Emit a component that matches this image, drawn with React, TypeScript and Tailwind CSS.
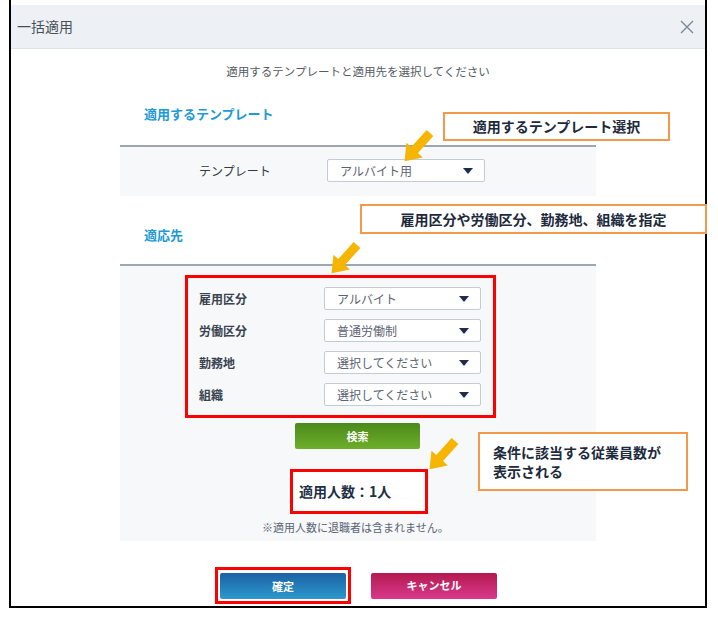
import React from 'react';

const font = { fontFamily: '"Noto Sans CJK JP", "Noto Sans", sans-serif' };

function Caret() {
  return (
    <svg width="10" height="6" viewBox="0 0 10 6" className="shrink-0">
      <polygon points="0,0 10,0 5,6" fill="#1e2d4a" />
    </svg>
  );
}

function Select({ value, width }: { value: string; width: string }) {
  return (
    <div className={`${width} h-[23px] bg-white border border-[#c3ccd6] rounded-[2px] flex items-center justify-between pl-[12px] pr-[11px]`}>
      <span className="text-[12px] text-[#5a6472] leading-none">{value}</span>
      <Caret />
    </div>
  );
}

function Arrow({ left, top }: { left: string; top: string }) {
  return (
    <svg width="40" height="40" viewBox="0 0 40 40" className={`absolute ${left} ${top} z-20`}>
      <g transform="translate(30,4) rotate(42)">
        <polygon points="-4.5,0 4.5,0 4.5,23 11,23 0,38 -11,23 -4.5,23" fill="#f6b500" />
      </g>
    </svg>
  );
}

const rows = [
  { label: '雇用区分', value: 'アルバイト' },
  { label: '労働区分', value: '普通労働制' },
  { label: '勤務地', value: '選択してください' },
  { label: '組織', value: '選択してください' },
];

export default function App() {
  return (
    <div className="relative w-[718px] h-[618px] bg-white overflow-hidden" style={font}>
      <div className="ml-[9px] w-[698px] h-[608px] border-x-2 border-b-2 border-black flex flex-col pt-[5px]">
        {/* header */}
        <div className="h-[44px] bg-[#edf1f5] border-b border-[#dde3ea] flex items-center justify-between pl-[6px] pr-[11px]">
          <span className="text-[14px] text-[#4a4f57]">一括適用</span>
          <svg width="14" height="14" viewBox="0 0 14 14">
            <path d="M1 1 L13 13 M13 1 L1 13" stroke="#7b8794" strokeWidth="1.4" fill="none" />
          </svg>
        </div>

        {/* body */}
        <div className="flex flex-col items-center">
          <p className="mt-[13px] text-[11.5px] leading-[18px] text-[#555b63]">
            適用するテンプレートと適用先を選択してください
          </p>

          <div className="w-[476px] mt-[25px]">
            <h3 className="pl-[24px] text-[13px] leading-[18px] font-bold text-[#1d9ad8]">適用するテンプレート</h3>
            <div className="mt-[22px] border-t-2 border-[#9ea6ae] bg-[#f6f8fa] h-[51px] flex items-start pt-[12px]">
              <span className="ml-[79px] mt-[4px] w-[128px] text-[12px] leading-[16px] text-[#333a44]">テンプレート</span>
              <Select value="アルバイト用" width="w-[158px]" />
            </div>

            <h3 className="mt-[30px] pl-[24px] text-[13px] leading-[18px] font-bold text-[#1d9ad8]">適応先</h3>
            <div className="mt-[20px] border-t-2 border-[#9ea6ae] bg-[#f6f8fa] h-[277px] flex flex-col pt-[9px]">
              <div className="ml-[65px] w-[311px] border-[3px] border-[#ff0000] flex flex-col gap-[9px] pt-[9px] pb-[9px] pl-[11px] pr-[12px]">
                {rows.map((r) => (
                  <div key={r.label} className="flex items-center justify-between">
                    <span className="text-[12px] font-bold text-[#3a4350]">{r.label}</span>
                    <Select value={r.value} width="w-[157px]" />
                  </div>
                ))}
              </div>
              <button className="mt-[5px] ml-[175px] w-[125px] h-[26px] rounded-[2px] bg-gradient-to-b from-[#4a8a1b] to-[#6eae2b] text-white text-[11px] font-bold">
                検索
              </button>
              <div className="mt-[20px] ml-[170px] w-[138px] h-[45px] border-[3px] border-[#ff0000] bg-white flex items-center pl-[6px]">
                <span className="text-[14px] font-bold text-[#1f2f45]">適用人数：1人</span>
              </div>
              <p className="mt-[5px] ml-[142px] text-[11px] leading-[16px] text-[#5a6472]">※適用人数に退職者は含まれません。</p>
            </div>
          </div>

          {/* footer buttons */}
          <div className="mt-[26px] flex items-center gap-[20px] pr-[4px]">
            <div className="border-[3px] border-[#ff0000] p-[2px]">
              <button className="w-[126px] h-[26px] rounded-[2px] bg-gradient-to-b from-[#1d61a6] to-[#2c99cb] text-white text-[11px] font-bold">
                確定
              </button>
            </div>
            <button className="w-[126px] h-[26px] rounded-[2px] bg-gradient-to-b from-[#b3184f] to-[#da388c] text-white text-[11px] font-bold">
              キャンセル
            </button>
          </div>
        </div>
      </div>

      {/* annotations */}
      <div className="absolute left-[443px] top-[112px] w-[227px] h-[29px] border-2 border-[#f3994a] bg-white flex items-center justify-center z-10">
        <span className="text-[14px] font-bold text-[#1c2a3c]">適用するテンプレート選択</span>
      </div>
      <div className="absolute left-[360px] top-[204px] w-[347px] h-[30px] border-2 border-[#f3994a] bg-white flex items-center justify-center z-10">
        <span className="text-[14px] font-bold text-[#1c2a3c]">雇用区分や労働区分、勤務地、組織を指定</span>
      </div>
      <div className="absolute left-[478px] top-[432px] w-[210px] h-[59px] border-2 border-[#f3994a] bg-white flex flex-col justify-center pl-[13px] z-10">
        <span className="text-[14px] leading-[19px] font-bold text-[#1c2a3c]">条件に該当する従業員数が</span>
        <span className="text-[14px] leading-[19px] font-bold text-[#1c2a3c]">表示される</span>
      </div>
      <Arrow left="left-[400px]" top="top-[129px]" />
      <Arrow left="left-[327px]" top="top-[241px]" />
      <Arrow left="left-[425px]" top="top-[437px]" />
    </div>
  );
}
